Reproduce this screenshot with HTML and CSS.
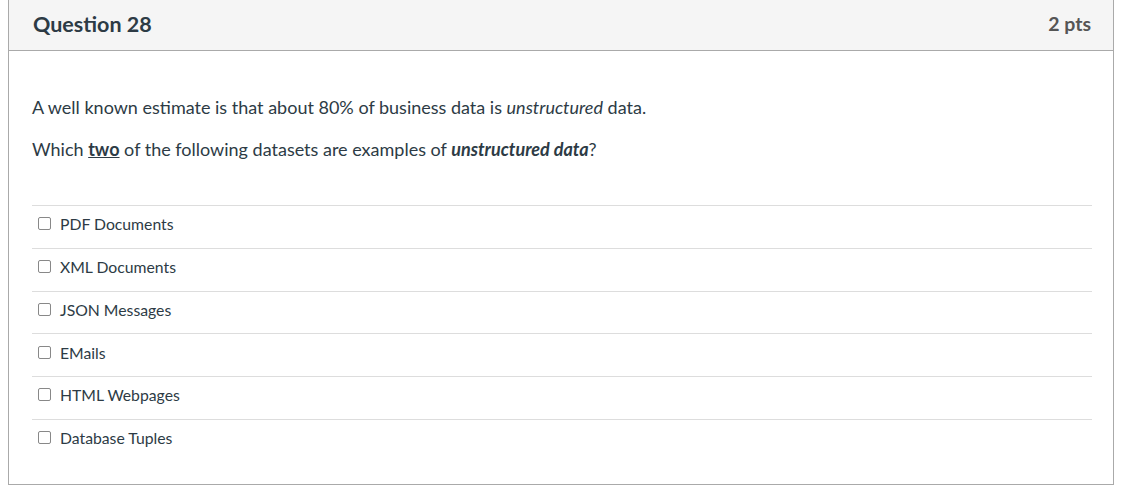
FILE: index.html
```html
<!DOCTYPE html>
<html lang="en">
<head>
    <meta charset="UTF-8">
    <title>Question 28</title>
    <link rel="stylesheet" href="styles.css">
</head>
<body>
<div class="question">
    <div class="question-header">
        <span class="question-title">Question 28</span>
        <span class="question-points">2 pts</span>
    </div>
    <div class="question-body">
        <p class="question-text">A well known estimate is that about 80% of business data is <em>unstructured</em> data.</p>
        <p class="question-text">Which <strong><u>two</u></strong> of the following datasets are examples of <strong><em>unstructured data</em></strong>?</p>

        <div class="answers">
            <label class="answer"><span class="box"></span>PDF Documents</label>
            <label class="answer"><span class="box"></span>XML Documents</label>
            <label class="answer"><span class="box"></span>JSON Messages</label>
            <label class="answer"><span class="box"></span>EMails</label>
            <label class="answer"><span class="box"></span>HTML Webpages</label>
            <label class="answer"><span class="box"></span>Database Tuples</label>
        </div>
    </div>
</div>
</body>
</html>
```

FILE: styles.css
```css
body {
    margin: 0;
    font-family: Lato, "Open Sans", sans-serif;
    color: #2d3b45;
    background-color: #ffffff;
}

.question {
    margin-left: 8px;
    width: 1104px;
    border: 1px solid #aaaaaa;
    border-top: none;
}

.question-header {
    display: flex;
    justify-content: space-between;
    align-items: center;
    height: 47px;
    padding: 0 22px 3px 24px;
    background-color: #f5f5f5;
    border-bottom: 1px solid #aaaaaa;
}

.question-title {
    font-size: 21.5px;
    font-weight: bold;
    color: #2d3b45;
}

.question-points {
    font-size: 19.5px;
    font-weight: bold;
    color: #555555;
}

.question-body {
    padding: 43px 21px 22px 23px;
}

.question-text {
    margin: 0 0 15px 0;
    font-size: 18px;
    line-height: 27px;
}

.answers {
    margin-top: 42px;
}

.answer {
    display: flex;
    align-items: center;
    height: 35.75px;
    padding: 0 0 6px 6px;
    border-top: 1px solid #dddddd;
    font-size: 15.75px;
}

.box {
    width: 11px;
    height: 11px;
    border: 1px solid #888888;
    border-radius: 2px;
    margin-right: 9px;
}
```
